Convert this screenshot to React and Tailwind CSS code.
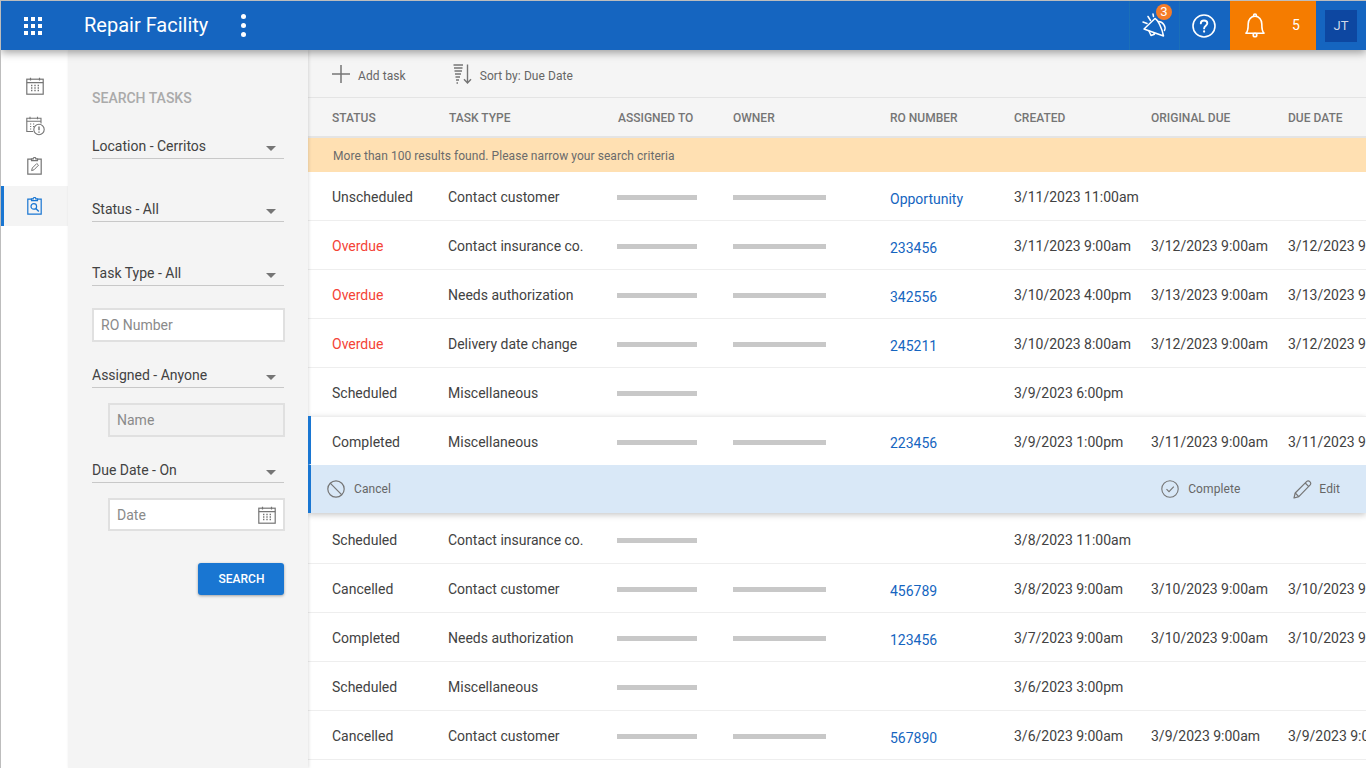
import React from "react";

const Calendar = ({ c = "#757575", size = 18 }) => (
  <svg width={size} height={size} viewBox="0 0 18 18" fill="none" stroke={c} strokeWidth="1.2">
    <rect x="0.8" y="2.2" width="16.4" height="15" />
    <path d="M0.8 5.6H17.2M4.5 0.8V3.4M13.5 0.8V3.4" />
    <path d="M5 8.5h1.4M8.3 8.5h1.4M11.6 8.5h1.4M5 11h1.4M8.3 11h1.4M11.6 11h1.4M5 13.5h1.4M8.3 13.5h1.4M11.6 13.5h1.4" strokeWidth="1.3" />
  </svg>
);
const CalendarAlert = () => (
  <svg width="19" height="20" viewBox="0 0 19 20" fill="none" stroke="#757575" strokeWidth="1.1">
    <path d="M7 15.5H0.8V2.2H15V7.5" />
    <path d="M0.8 5.2H15M4 0.8V3.2M11.5 0.8V3.2" />
    <path d="M4 8h1.2M7 8h1.2M4 10.5h1.2M7 10.5h1.2M4 13h1.2" />
    <circle cx="13" cy="13.5" r="5.2" fill="#fff" />
    <path d="M13 10.5V14.2M13 15.5V16.8" strokeWidth="1.4" />
  </svg>
);
const ClipEdit = () => (
  <svg width="15" height="18" viewBox="0 0 15 18" fill="none" stroke="#757575" strokeWidth="1.2">
    <path d="M4.5 2.2H0.8V17.2H14.2V2.2H10.5" />
    <path d="M4.5 3.6V1.8H6.2A1.3 1.3 0 0 1 8.8 1.8H10.5V3.6Z" />
    <path d="M4.6 13.6L5.3 11L9.8 6.5L11.5 8.2L7 12.8Z" strokeWidth="1" />
  </svg>
);
const ClipSearch = () => (
  <svg width="15" height="18" viewBox="0 0 15 18" fill="none" stroke="#1976d2" strokeWidth="1.2">
    <path d="M4.5 2.2H0.8V17.2H14.2V2.2H10.5" />
    <path d="M4.5 3.6V1.8H6.2A1.3 1.3 0 0 1 8.8 1.8H10.5V3.6Z" />
    <circle cx="6.8" cy="9.4" r="2.8" />
    <path d="M8.8 11.4L11.8 14.6" strokeWidth="1.4" />
  </svg>
);
const Megaphone = () => (
  <svg width="26" height="26" viewBox="0 0 26 26" fill="none" stroke="#fff" strokeWidth="1.5" strokeLinejoin="round" strokeLinecap="round">
    <path d="M2 16L13 5.5C16 7 20 15 21.5 23Z" />
    <path d="M16.5 8.5C20.5 8.5 24.5 13.5 22.5 17.5M7 18L9 22.5L12.5 21.2L11.8 19.8" />
    <path d="M1 9L5 10.5M6 3.5L8.5 7.5M11 1L11.5 3.5" />
  </svg>
);
const Help = () => (
  <svg width="24" height="24" viewBox="0 0 24 24" fill="none" stroke="#fff" strokeWidth="1.6" strokeLinecap="round">
    <circle cx="12" cy="12" r="11" />
    <path d="M8.8 9.4C8.8 7.5 10.3 6.5 12 6.5C13.8 6.5 15.3 7.6 15.3 9.3C15.3 11.6 12.1 11.8 12.1 14.4" strokeWidth="1.9" />
    <path d="M12.1 17.4V17.6" strokeWidth="2.2" />
  </svg>
);
const Bell = () => (
  <svg width="20" height="25" viewBox="0 0 20 25" fill="none" stroke="#fff" strokeWidth="1.6" strokeLinejoin="round">
    <path d="M1 20.2H19C17 18.5 16.8 16.5 16.8 11C16.8 6.5 14 3.2 10 3.2C6 3.2 3.2 6.5 3.2 11C3.2 16.5 3 18.5 1 20.2Z" />
    <path d="M8.6 3.2V2.4A1.4 1.4 0 0 1 11.4 2.4V3.2" />
    <circle cx="10" cy="22" r="1.8" />
  </svg>
);
const Sort = () => (
  <svg width="20" height="20" viewBox="0 0 20 20" fill="none" stroke="#757575">
    <path d="M0.5 1H10M1 4H9.5M1.5 7H9M2 10H8M2.5 13H7M3 16H6M3.5 19H5" strokeWidth="1.3" />
    <path d="M14.5 0.5V18.8M11 15.2L14.5 19L18 15.2" strokeWidth="1.4" />
  </svg>
);
const Plus = () => (
  <svg width="18" height="18" viewBox="0 0 18 18" stroke="#757575" strokeWidth="1.5"><path d="M9 0V18M0 9H18" /></svg>
);
const Ban = () => (
  <svg width="18" height="18" viewBox="0 0 18 18" fill="none" stroke="#757575" strokeWidth="1.2">
    <circle cx="9" cy="9" r="8.2" /><path d="M3.2 3.2L14.8 14.8" />
  </svg>
);
const Check = () => (
  <svg width="18" height="18" viewBox="0 0 18 18" fill="none" stroke="#757575" strokeWidth="1.1">
    <circle cx="9" cy="9" r="8.2" /><path d="M5.5 9.2L8 11.6L12.8 6.6" />
  </svg>
);
const Pencil = () => (
  <svg width="19" height="19" viewBox="0 0 19 19" fill="none" stroke="#757575" strokeWidth="1.2" strokeLinejoin="round">
    <path d="M1 18L2.2 13L13.8 1.4C14.6 0.6 15.8 0.6 16.8 1.6C18 2.8 18 4 17.2 4.8L5.8 16.6Z" />
    <path d="M2.2 13L5.8 16.6M12.2 3L15.8 6.6" />
  </svg>
);
const Caret = () => <span className="w-0 h-0 border-x-[5px] border-x-transparent border-t-[5px] border-t-[#757575] mr-[8px] mt-[4px]" />;

const Select = ({ label, className }) => (
  <div className={`flex items-center justify-between h-[25px] w-[192px] border-b border-[#c8c8c8] text-[14px] text-[#424242] ${className}`}>
    <span>{label}</span>
    <Caret />
  </div>
);

const rows = [
  ["Unscheduled", "Contact customer", 1, 1, "Opportunity", "3/11/2023 11:00am", "", ""],
  ["Overdue", "Contact insurance co.", 1, 1, "233456", "3/11/2023 9:00am", "3/12/2023 9:00am", "3/12/2023 9:00am"],
  ["Overdue", "Needs authorization", 1, 1, "342556", "3/10/2023 4:00pm", "3/13/2023 9:00am", "3/13/2023 9:00am"],
  ["Overdue", "Delivery date change", 1, 1, "245211", "3/10/2023 8:00am", "3/12/2023 9:00am", "3/12/2023 9:00am"],
  ["Scheduled", "Miscellaneous", 1, 0, "", "3/9/2023 6:00pm", "", ""],
  ["Completed", "Miscellaneous", 1, 1, "223456", "3/9/2023 1:00pm", "3/11/2023 9:00am", "3/11/2023 9:00am"],
  ["Scheduled", "Contact insurance co.", 1, 0, "", "3/8/2023 11:00am", "", ""],
  ["Cancelled", "Contact customer", 1, 1, "456789", "3/8/2023 9:00am", "3/10/2023 9:00am", "3/10/2023 9:00am"],
  ["Completed", "Needs authorization", 1, 1, "123456", "3/7/2023 9:00am", "3/10/2023 9:00am", "3/10/2023 9:00am"],
  ["Scheduled", "Miscellaneous", 1, 0, "", "3/6/2023 3:00pm", "", ""],
  ["Cancelled", "Contact customer", 1, 1, "567890", "3/6/2023 9:00am", "3/9/2023 9:00am", "3/9/2023 9:00am"],
];

const COLS = "grid grid-cols-[116px_169px_116px_157px_124px_137px_137px_137px] items-center";

const Row = ({ r, selected }) => (
  <div className={`${COLS} h-[49px] text-[14px] text-[#424242] whitespace-nowrap border-b ${selected ? "border-l-[3px] border-l-[#1976d2] border-b-transparent pl-[21px] pt-[2px]" : "border-b-[#eeeeee] pl-[24px]"}`}>
    <span className={`mt-[2px] ${r[0] === "Overdue" ? "text-[#f44336]" : ""}`}>{r[0]}</span>
    <span className="mt-[2px]">{r[1]}</span>
    <span className="block w-[80px] h-[5px] bg-[#c8c8c8] mt-[3px]" />
    {r[3] ? <span className="block w-[93px] h-[5px] bg-[#c8c8c8] mt-[3px]" /> : <span />}
    <span className={`text-[#1565c0] ${selected ? "mt-[5px]" : "mt-[7px]"}`}>{r[4]}</span>
    <span className="mt-[2px]">{r[5]}</span>
    <span className="mt-[2px]">{r[6]}</span>
    <span className="mt-[2px]">{r[7]}</span>
  </div>
);

export default function App() {
  return (
    <div className="w-[1366px] h-[768px] overflow-hidden flex flex-col border-l border-t border-[#bdbdbd] bg-white font-['Roboto',sans-serif]">
      <header className="h-[49px] shrink-0 flex items-center bg-[#1565c0] text-white relative z-20 shadow-[0_3px_8px_rgba(0,0,0,0.35)]">
        <div className="w-[63px] flex justify-center pl-[1px]">
          <div className="grid grid-cols-3 gap-[3px]">
            {Array.from({ length: 9 }).map((_, i) => <span key={i} className="w-[4px] h-[4px] bg-white" />)}
          </div>
        </div>
        <span className="ml-[20px] text-[20px] leading-none -mt-[2px]">Repair Facility</span>
        <div className="ml-[33px] flex flex-col gap-[4px]">
          <span className="w-[5px] h-[5px] bg-white rounded-full" />
          <span className="w-[5px] h-[5px] bg-white rounded-full" />
          <span className="w-[5px] h-[5px] bg-white rounded-full" />
        </div>
        <div className="ml-auto flex items-center h-full">
          <div className="relative w-[51px] h-full flex items-center justify-center border-x border-[#1a6fb8]">
            <Megaphone />
            <span className="absolute left-[26px] top-[3px] w-[16px] h-[16px] rounded-full bg-[#f57c28] text-[13px] leading-[16px] text-center">3</span>
          </div>
          <div className="w-[50px] h-full flex items-center justify-center pr-[2px]"><Help /></div>
          <div className="w-[86px] h-full flex items-center bg-[#f57c00]">
            <span className="ml-[15px]"><Bell /></span>
            <span className="ml-[27px] text-[14px]">5</span>
          </div>
          <div className="w-[50px] h-full flex items-center justify-center">
            <span className="w-[32px] h-[32px] bg-[#0d47a1] text-[#cfd8e8] text-[13px] flex items-center justify-center">JT</span>
          </div>
        </div>
      </header>

      <div className="flex flex-1 min-h-0">
        <nav className="w-[67px] shrink-0 bg-white flex flex-col pt-[16px]">
          <div className="h-[40px] flex items-center justify-center"><Calendar /></div>
          <div className="h-[40px] flex items-center justify-center pl-[1px]"><CalendarAlert /></div>
          <div className="h-[40px] flex items-center justify-center"><ClipEdit /></div>
          <div className="h-[40px] flex items-center justify-center bg-[#f4f4f4] border-l-[3px] border-[#1976d2] pr-[3px]"><ClipSearch /></div>
        </nav>

        <aside className="w-[240px] shrink-0 bg-[#f4f4f4] pl-[24px] pt-[40px] relative z-10 shadow-[1px_0_3px_rgba(0,0,0,0.12)]">
          <h2 className="text-[14px] leading-[16px] font-medium text-[#aaaaaa]">SEARCH TASKS</h2>
          <Select label="Location - Cerritos" className="mt-[28px]" />
          <Select label="Status - All" className="mt-[38px]" />
          <Select label="Task Type - All" className="mt-[39px]" />
          <div className="mt-[22px] w-[193px] h-[34px] bg-white border-2 border-[#e0e0e0] pl-[7px] flex items-center text-[14px] text-[#8a8a8a]">RO Number</div>
          <Select label="Assigned - Anyone" className="mt-[21px]" />
          <div className="mt-[15px] ml-[16px] w-[177px] h-[34px] bg-[#f2f2f2] border-2 border-[#e0e0e0] pl-[7px] flex items-center text-[14px] text-[#8a8a8a]">Name</div>
          <Select label="Due Date - On" className="mt-[21px]" />
          <div className="mt-[15px] ml-[16px] w-[177px] h-[33px] bg-white border-2 border-[#e0e0e0] pl-[7px] pr-[7px] flex items-center justify-between text-[14px] text-[#8a8a8a]">
            <span className="mt-[1px]">Date</span>
            <Calendar />
          </div>
          <div className="mt-[32px] w-[192px] flex justify-end">
            <button className="w-[86px] h-[32px] pl-[1px] bg-[#1976d2] text-white text-[12px] font-medium rounded-[3px] shadow-[0_1px_3px_rgba(0,0,0,0.35)]">SEARCH</button>
          </div>
        </aside>

        <main className="flex-1 min-w-0 overflow-hidden bg-white">
          <div className="h-[48px] bg-[#f5f5f5] border-b border-[#e4e4e4] flex items-center pl-[24px] pt-[1px] text-[12px] tracking-[0.08px] text-[#666666]">
            <Plus />
            <span className="ml-[8px] mt-[3px]">Add task</span>
            <span className="ml-[47px]"><Sort /></span>
            <span className="ml-[7px] mt-[3px]">Sort by: Due Date</span>
          </div>
          <div className={`${COLS} h-[40px] bg-[#f5f5f5] border-b-2 border-[#e4e4e4] pl-[24px] text-[12px] font-medium text-[#757575] whitespace-nowrap`}>
            <span className="mt-[2px]">STATUS</span>
            <span className="mt-[2px] pl-[1px]">TASK TYPE</span>
            <span className="mt-[2px] pl-[1px]">ASSIGNED TO</span>
            <span className="mt-[2px]">OWNER</span>
            <span className="mt-[2px]">RO NUMBER</span>
            <span className="mt-[2px]">CREATED</span>
            <span className="mt-[2px]">ORIGINAL DUE</span>
            <span className="mt-[2px]">DUE DATE</span>
          </div>
          <div className="h-[34px] bg-[#ffe0b2] flex items-center pl-[25px] pt-[2px] text-[12px] tracking-[0.06px] text-[#6b6b6b]">
            More than 100 results found. Please narrow your search criteria
          </div>
          {rows.slice(0, 5).map((r, i) => <Row key={i} r={r} />)}
          <div className="relative z-10 -mt-[1px] mb-[2px] shadow-[0_2px_6px_rgba(0,0,0,0.22)]">
            <Row r={rows[5]} selected />
            <div className="h-[48px] bg-[#d9e8f7] border-l-[3px] border-[#1976d2] flex items-center pl-[16px] text-[12px] tracking-[0.08px] text-[#666666]">
              <Ban />
              <span className="ml-[9px]">Cancel</span>
              <span className="ml-auto"><Check /></span>
              <span className="ml-[9px]">Complete</span>
              <span className="ml-[53px]"><Pencil /></span>
              <span className="ml-[7px] mr-[26px]">Edit</span>
            </div>
          </div>
          {rows.slice(6).map((r, i) => <Row key={i} r={r} />)}
        </main>
      </div>
    </div>
  );
}
